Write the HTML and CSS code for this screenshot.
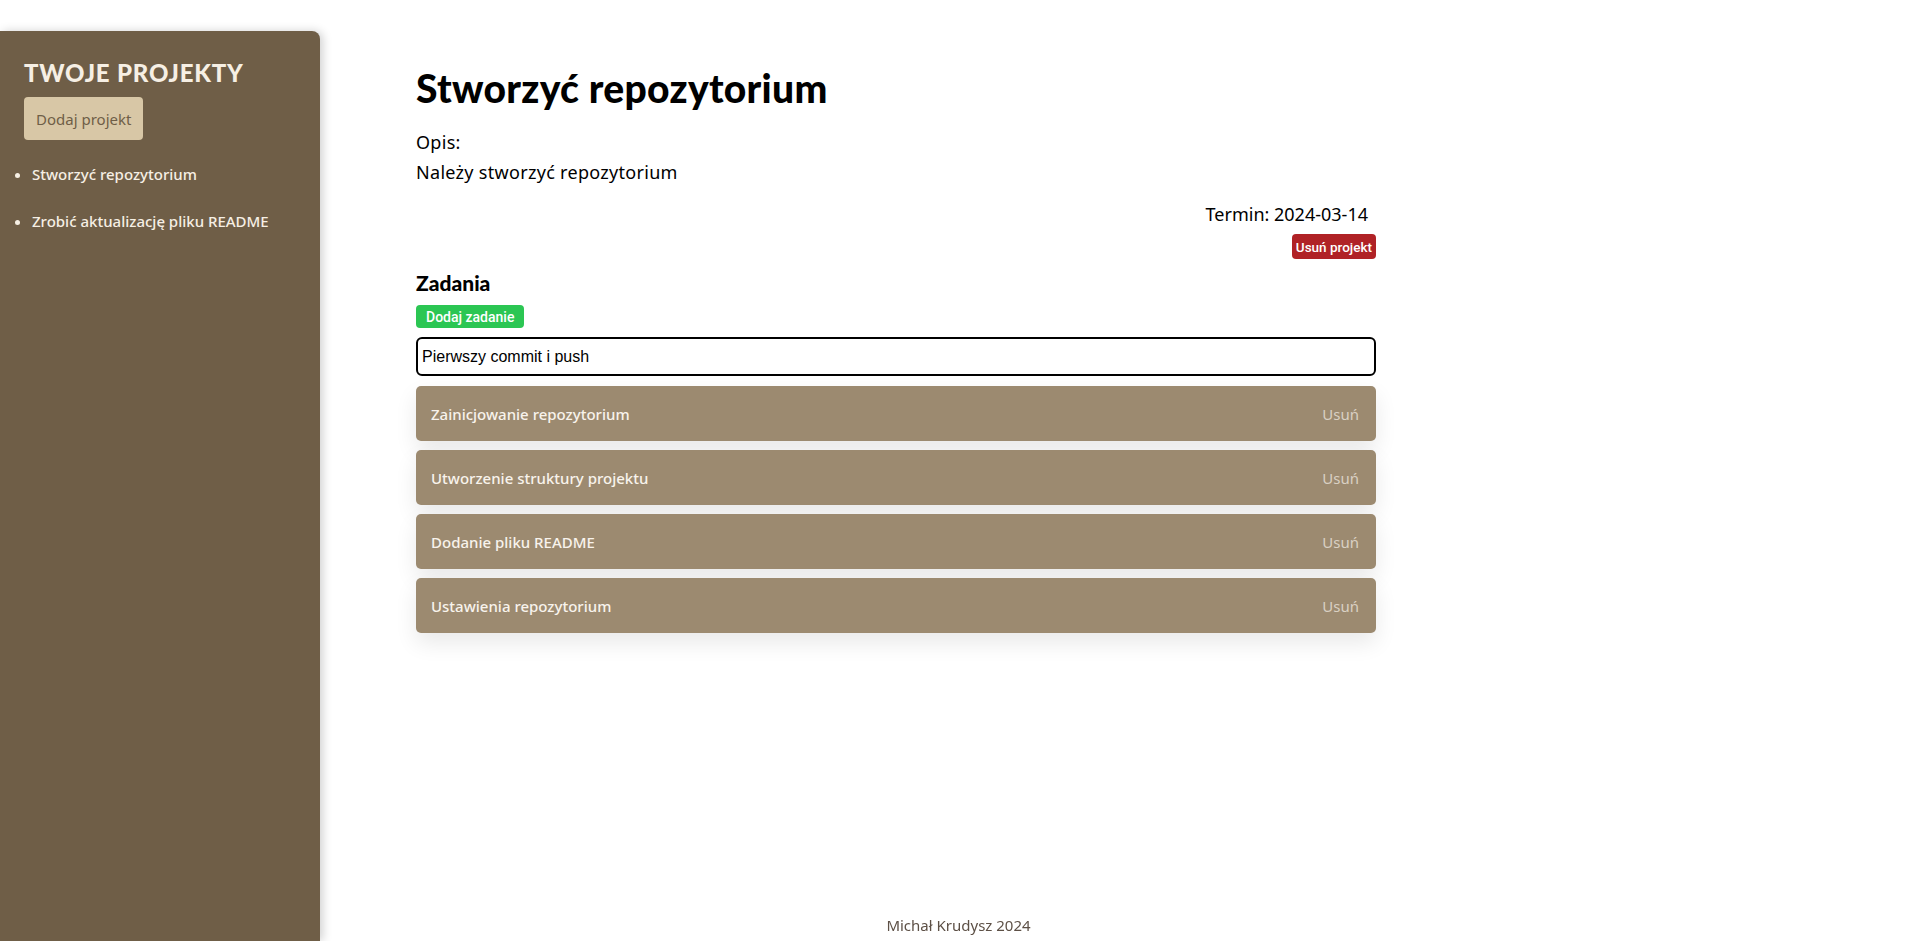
FILE: index.html
```html
<!DOCTYPE html>
<html lang="pl">
<head>
<meta charset="utf-8">
<title>Projekty</title>
<link rel="stylesheet" href="styles.css">
</head>
<body>
<div class="layout">
  <aside class="sidebar">
    <h2 class="sidebar-title">Twoje projekty</h2>
    <button class="add-project">Dodaj projekt</button>
    <ul class="project-list">
      <li>Stworzyć repozytorium</li>
      <li>Zrobić aktualizację pliku README</li>
    </ul>
  </aside>
  <main class="project">
    <h1 class="project-title">Stworzyć repozytorium</h1>
    <p class="desc-label">Opis:</p>
    <p class="desc">Należy stworzyć repozytorium</p>
    <div class="meta">
      <p class="deadline">Termin: 2024-03-14</p>
      <button class="delete-project">Usuń projekt</button>
    </div>
    <h3 class="tasks-title">Zadania</h3>
    <button class="add-task">Dodaj zadanie</button>
    <input class="task-input" type="text" value="Pierwszy commit i push">
    <ul class="task-list">
      <li class="task"><span>Zainicjowanie repozytorium</span><button class="task-delete">Usuń</button></li>
      <li class="task"><span>Utworzenie struktury projektu</span><button class="task-delete">Usuń</button></li>
      <li class="task"><span>Dodanie pliku README</span><button class="task-delete">Usuń</button></li>
      <li class="task"><span>Ustawienia repozytorium</span><button class="task-delete">Usuń</button></li>
    </ul>
  </main>
</div>
<footer class="footer">Michał Krudysz 2024</footer>
</body>
</html>
```
FILE: styles.css
```css
html, body {
  margin: 0;
  padding: 0;
  background: #ffffff;
  font-family: "Noto Sans", "Liberation Sans", sans-serif;
  color: #000;
  overflow: hidden;
}

.layout {
  display: flex;
  gap: 96px;
  margin-top: 31px;
  height: calc(100vh - 31px);
}

.sidebar {
  width: 320px;
  flex-shrink: 0;
  box-sizing: border-box;
  background: #6f5e47;
  border-top-right-radius: 8px;
  box-shadow: 3px 0 10px rgba(0, 0, 0, 0.18);
  padding-top: 26px;
  color: #f6efe4;
}

.sidebar-title {
  margin: 0 0 0 24px;
  font-family: "Lato", "Noto Sans", sans-serif;
  font-weight: 900;
  font-size: 24px;
  line-height: 32px;
  letter-spacing: 0.8px;
  text-transform: uppercase;
  color: #f6efe4;
}

.add-project {
  margin: 8px 0 0 24px;
  height: 43px;
  padding: 0 12px;
  border: none;
  border-radius: 4px;
  background: #d8c7a6;
  color: #6f5e47;
  font-family: inherit;
  font-size: 15px;
  cursor: pointer;
}

.project-list {
  margin: 22px 0 0;
  padding: 0 0 0 32px;
  list-style: disc;
}

.project-list li {
  font-size: 15px;
  font-weight: 500;
  line-height: 24px;
  margin-bottom: 23px;
}

.project {
  width: 960px;
  padding-top: 37px;
}

.project-title {
  margin: 0;
  font-family: "Lato", "Noto Sans", sans-serif;
  font-weight: 900;
  font-size: 39px;
  line-height: 40px;
  letter-spacing: 0.3px;
}

.desc-label,
.desc {
  margin: 0;
  font-size: 18px;
  line-height: 28px;
  letter-spacing: 0.3px;
}

.desc-label {
  margin-top: 20px;
}

.desc {
  margin-top: 2px;
}

.meta {
  display: flex;
  flex-direction: column;
  align-items: flex-end;
  margin-top: 14px;
}

.deadline {
  margin: 0 8px 0 0;
  font-size: 18px;
  line-height: 28px;
}

.delete-project {
  margin-top: 6px;
  height: 25px;
  padding: 0 4px;
  border: none;
  border-radius: 4px;
  background: #b02226;
  color: #fff;
  font-family: "Roboto", "Liberation Sans", sans-serif;
  font-weight: 500;
  font-size: 13.5px;
  cursor: pointer;
}

.tasks-title {
  margin: 10px 0 0;
  font-family: "Lato", "Noto Sans", sans-serif;
  font-weight: 900;
  font-size: 21px;
  line-height: 28px;
}

.add-task {
  display: block;
  margin-top: 8px;
  height: 23px;
  padding: 0 10px;
  border: none;
  border-radius: 4px;
  background: #2bc653;
  color: #fff;
  font-family: "Roboto", "Liberation Sans", sans-serif;
  font-weight: 500;
  font-size: 14px;
  cursor: pointer;
}

.task-input {
  display: block;
  box-sizing: border-box;
  width: 100%;
  height: 39px;
  margin-top: 9px;
  padding: 0 4px;
  border: 2px solid #000;
  border-radius: 6px;
  font-family: "Liberation Sans", Arial, sans-serif;
  font-size: 16px;
  color: #000;
  background: #fff;
}

.task-list {
  list-style: none;
  margin: 10px 0 0;
  padding: 0;
  display: flex;
  flex-direction: column;
  gap: 9px;
}

.task {
  display: flex;
  align-items: center;
  justify-content: space-between;
  height: 55px;
  padding: 0 17px 0 15px;
  box-sizing: border-box;
  background: #9c8a70;
  border-radius: 5px;
  box-shadow: 0 10px 22px rgba(0, 0, 0, 0.09);
  color: #f8f3ec;
  font-size: 15px;
  font-weight: 500;
}

.task-delete {
  border: none;
  background: none;
  padding: 0;
  color: #d9d0c3;
  font-family: inherit;
  font-size: 15px;
  cursor: pointer;
}

.footer {
  position: fixed;
  left: 0;
  right: 0;
  bottom: 6px;
  text-align: center;
  font-size: 15px;
  color: #5d5046;
}
```
